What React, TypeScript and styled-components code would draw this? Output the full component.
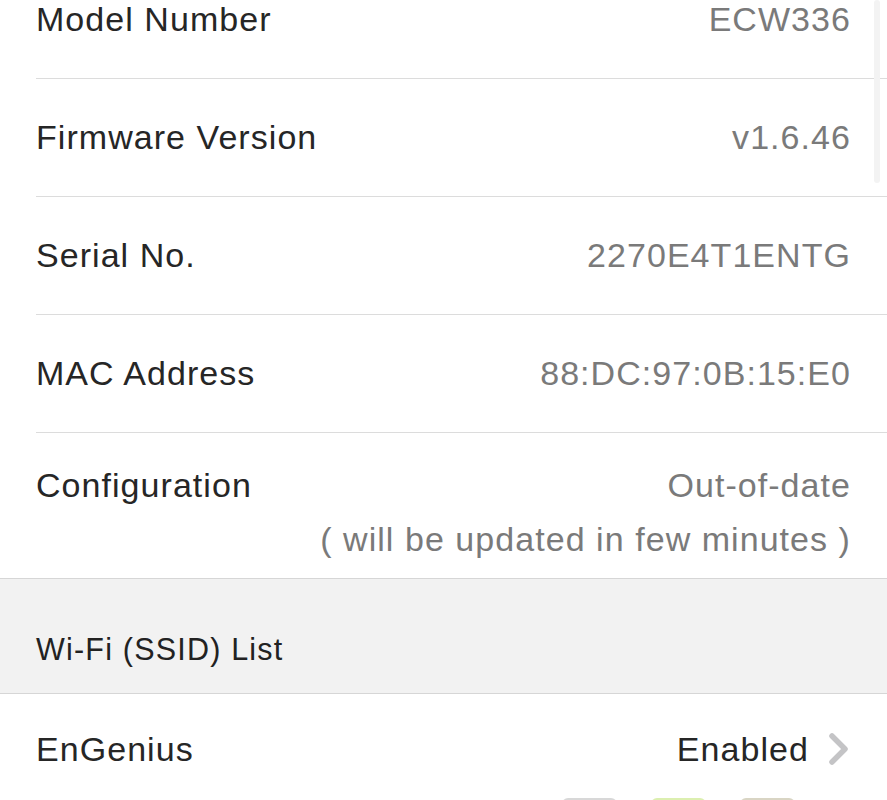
import React from "react";
import styled, { createGlobalStyle } from "styled-components";

const Global = createGlobalStyle`
  html, body { margin: 0; padding: 0; background: #ffffff; }
  body { font-family: "Liberation Sans", Arial, sans-serif; -webkit-font-smoothing: antialiased; }
`;

const Page = styled.div`
  position: relative;
  width: 887px;
  height: 800px;
  overflow: hidden;
  background: #ffffff;
`;

const List = styled.div`
  display: flex;
  flex-direction: column;
  margin-top: -39px;
`;

const Row = styled.div<{ $h: number; $last?: boolean }>`
  height: ${(p) => p.$h}px;
  margin-left: 36px;
  padding-right: 36px;
  display: flex;
  align-items: center;
  justify-content: space-between;
  border-bottom: ${(p) => (p.$last ? "none" : "1.5px solid #dcdcdc")};
  box-sizing: border-box;
`;

const TallRow = styled(Row)`
  align-items: flex-start;
  padding-top: 33px;
`;

const Label = styled.span`
  font-size: 34px;
  color: #262626;
  letter-spacing: 1.05px;
`;

const Value = styled.span<{ $dark?: boolean }>`
  font-size: 34px;
  color: ${(p) => (p.$dark ? "#262626" : "#7a7a7a")};
  letter-spacing: 1.05px;
`;

const ValueStack = styled.div`
  display: flex;
  flex-direction: column;
  align-items: flex-end;
  gap: 15px;
`;

const SectionHeader = styled.div`
  height: 116px;
  background: #f2f2f2;
  border-top: 1.5px solid #d6d6d6;
  border-bottom: 1.5px solid #d6d6d6;
  box-sizing: border-box;
  display: flex;
  align-items: flex-end;
  padding: 0 36px 26px;
`;

const SectionTitle = styled.span`
  font-size: 30.5px;
  color: #222222;
  letter-spacing: 1.2px;
`;

const Trailing = styled.div`
  display: flex;
  align-items: center;
  gap: 18px;
`;

const Chevron = styled.svg`
  width: 24px;
  height: 34px;
  display: block;
`;

const Scrollbar = styled.div`
  position: absolute;
  top: 0;
  left: 874px;
  width: 6px;
  height: 183px;
  border-radius: 3px;
  background: #f3f3f3;
`;

const Dock = styled.div`
  display: flex;
  gap: 34px;
  padding-left: 562px;
  margin-top: -6px;
`;

const DockItem = styled.div<{ $c: string }>`
  width: 55px;
  height: 20px;
  border-radius: 6px 6px 0 0;
  border-top: 2px solid ${(p) => p.$c};
`;

const rows = [
  { label: "Model Number", value: "ECW336" },
  { label: "Firmware Version", value: "v1.6.46" },
  { label: "Serial No.", value: "2270E4T1ENTG" },
  { label: "MAC Address", value: "88:DC:97:0B:15:E0" },
];

export default function App() {
  return (
    <Page>
      <Global />
      <List>
        {rows.map((r) => (
          <Row key={r.label} $h={118}>
            <Label>{r.label}</Label>
            <Value>{r.value}</Value>
          </Row>
        ))}
        <TallRow $h={145} $last>
          <Label>Configuration</Label>
          <ValueStack>
            <Value>Out-of-date</Value>
            <Value>( will be updated in few minutes )</Value>
          </ValueStack>
        </TallRow>
        <SectionHeader>
          <SectionTitle>Wi-Fi (SSID) List</SectionTitle>
        </SectionHeader>
        <Row $h={110} $last>
          <Label>EnGenius</Label>
          <Trailing>
            <Value $dark>Enabled</Value>
            <Chevron viewBox="0 0 24 34">
              <path
                d="M5 4 L18 17 L5 30"
                fill="none"
                stroke="#c4c4c6"
                strokeWidth="5.5"
                strokeLinecap="round"
                strokeLinejoin="round"
              />
            </Chevron>
          </Trailing>
        </Row>
        <Dock>
          <DockItem $c="#d8d8d8" />
          <DockItem $c="#dcefb0" />
          <DockItem $c="#d9d5c4" />
        </Dock>
      </List>
      <Scrollbar />
    </Page>
  );
}
